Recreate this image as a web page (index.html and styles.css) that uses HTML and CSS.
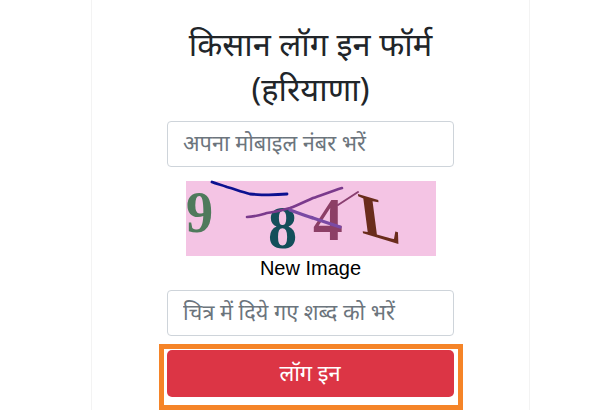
FILE: index.html
```html
<!DOCTYPE html>
<html lang="hi">
<head>
<meta charset="utf-8">
<title>किसान लॉग इन फॉर्म</title>
<link rel="stylesheet" href="styles.css">
</head>
<body>
<main class="card">
  <h1 class="title">किसान लॉग इन फॉर्म<br>(हरियाणा)</h1>
  <form class="form">
    <input class="field" type="text" placeholder="अपना मोबाइल नंबर भरें">
    <svg class="captcha" viewBox="0 0 250 75" xmlns="http://www.w3.org/2000/svg" role="img" aria-label="captcha">
      <rect width="250" height="75" fill="#f4c4e4"/>
      <text class="c9" transform="matrix(.92 0 0 1 0 51)" fill="#4f7a5c">9</text>
      <text class="c8" transform="matrix(.94 0 0 1 82 67)" fill="#134e5a">8</text>
      <text class="c4" transform="matrix(.96 0 0 1 127 59)" fill="#8c3f66">4</text>
      <text class="cl" transform="matrix(1 .3 .13 1 176 52)" fill="#6a2c1c">L</text>
      <path class="ln blue" d="M26 1 C31 3 36 4 41 6 C48 8 56 11 64 13 C76 14 90 14 101 13"/>
      <path class="ln vio" d="M61 36 C68 36 74 34 81 32 C90 31 97 29 104 27 C112 24 120 20 127 17 C136 14 146 10 156 7"/>
      <path class="ln lil" d="M104 29 C112 32 120 35 127 37 C136 40 145 43 154 46"/>
      <path class="ln pin" d="M152 24 L172 11"/>
    </svg>
    <a class="refresh" href="#">New Image</a>
    <input class="field" type="text" placeholder="चित्र में दिये गए शब्द को भरें">
    <div class="highlight">
      <button class="submit" type="button">लॉग इन</button>
    </div>
  </form>
</main>
</body>
</html>
```
FILE: styles.css
```css
html, body {
  margin: 0;
  height: 410px;
  overflow: hidden;
  background: #fff;
}
body {
  font-family: "Noto Sans", "Liberation Sans", sans-serif;
  color: #212529;
}
.card {
  box-sizing: border-box;
  width: 439px;
  height: 410px;
  margin-left: 91px;
  border-left: 1px solid #f3f3f3;
  border-right: 1px solid #f3f3f3;
  padding-top: 21px;
  display: flex;
  flex-direction: column;
  align-items: center;
}
.title {
  margin: 0 0 10px;
  font-size: 32.6px;
  line-height: 45px;
  font-weight: 400;
  text-align: center;
}
.form {
  display: flex;
  flex-direction: column;
  align-items: center;
}
.field {
  box-sizing: border-box;
  width: 287px;
  height: 46px;
  padding: 0 15px 3px;
  border: 1px solid #ced4da;
  border-radius: 4px;
  font-family: inherit;
  font-size: 21.7px;
}
.field::placeholder { color: #6c757d; }
.captcha {
  display: block;
  width: 250px;
  height: 75px;
  margin-top: 14px;
  overflow: visible;
}
.captcha text { font-family: "Liberation Serif", serif; font-weight: 700; }
.c9 { font-size: 59px; }
.c8 { font-size: 62px; }
.c4 { font-size: 62px; }
.cl { font-size: 60px; }
.ln { fill: none; stroke-linecap: round; }
.blue { stroke: #0c1190; stroke-width: 2.8; }
.vio { stroke: #7a3a8c; stroke-width: 2.6; }
.lil { stroke: #7a4aa4; stroke-width: 3.4; }
.pin { stroke: #8a3f70; stroke-width: 2; }
.refresh {
  height: 34px;
  line-height: 24px;
  font-family: "Liberation Sans", Arial, sans-serif;
  font-size: 20px;
  color: #000;
  text-decoration: none;
}
.highlight {
  box-sizing: border-box;
  width: 304px;
  margin-top: 8px;
  padding: 1px 3px 8px;
  border: 5px solid #f58428;
}
.submit {
  display: block;
  width: 287px;
  height: 47px;
  padding: 0 0 3px;
  border: 0;
  border-radius: 5px;
  background: #dc3545;
  color: #fff;
  font-family: inherit;
  font-size: 21.8px;
}
```
